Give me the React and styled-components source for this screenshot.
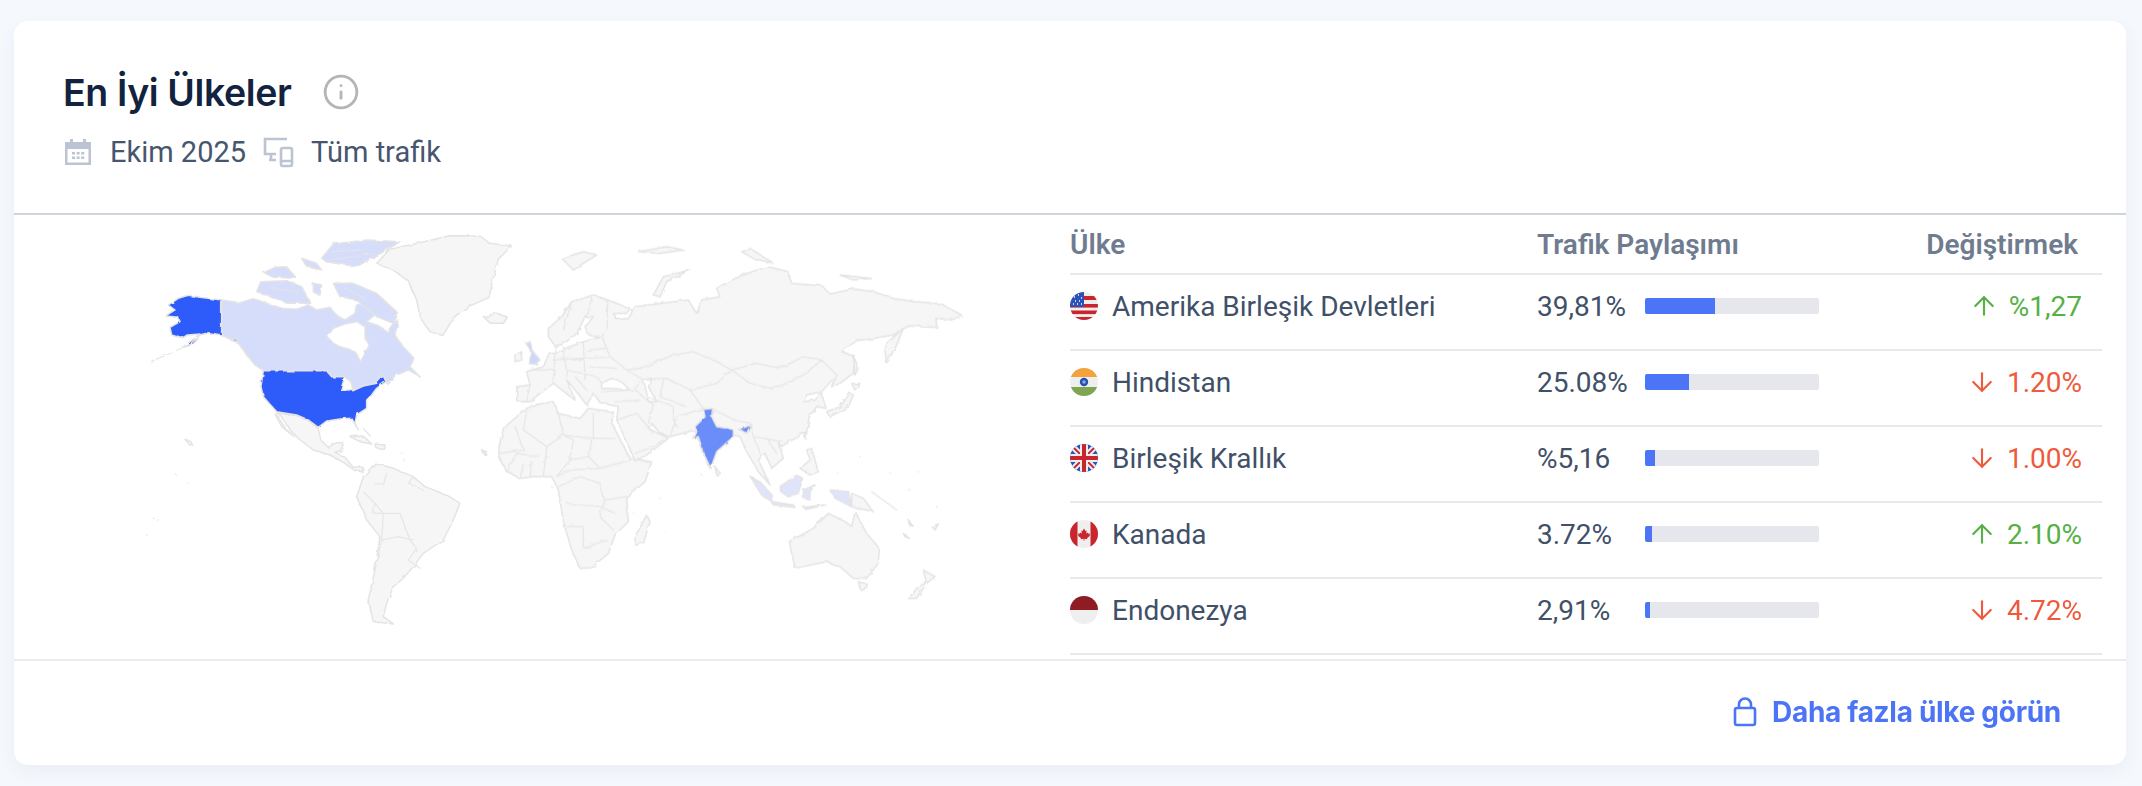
import React from "react";
import styled, { createGlobalStyle } from "styled-components";
import { ArrowUp, ArrowDown, Info } from "lucide-react";

const Global = createGlobalStyle`
  html, body { margin: 0; padding: 0; background: #f5f8fd; }
  body { font-family: Roboto, "Noto Sans", sans-serif; }
`;

const Page = styled.div`
  padding: 21px 16px 21px 14px;
  height: 786px;
  box-sizing: border-box;
`;

const Card = styled.section`
  background: #fff;
  border-radius: 14px;
  box-shadow: 0 6px 18px rgba(60, 80, 120, 0.06);
  height: 744px;
  display: flex;
  flex-direction: column;
  overflow: hidden;
`;

const Header = styled.header`
  padding: 47px 0 0 49px;
  height: 145px;
  border-bottom: 2px solid #cfd4dc;
  display: flex;
  flex-direction: column;
`;

const TitleRow = styled.div`
  display: flex;
  align-items: center;
  gap: 31px;
  height: 48px;
`;

const Title = styled.h2`
  margin: 0;
  font-family: Inter, sans-serif;
  font-size: 37.5px;
  font-weight: 600;
  color: #12233f;
  letter-spacing: -0.4px;
`;

const InfoMark = styled(Info)`
  color: #b5b5b5;
  width: 38px;
  height: 38px;
`;

const Meta = styled.div`
  display: flex;
  align-items: center;
  margin-top: 20px;
  margin-left: 1px;
  height: 32px;
  font-size: 29px;
  color: #46566e;
`;

const MetaIcon = styled.svg`
  color: #bcc3d2;
  flex: none;
`;

const MetaText = styled.span`
  margin-left: ${(p) => p.$gap}px;
  margin-right: ${(p) => p.$after || 0}px;
`;

const Body = styled.div`
  display: flex;
  height: 444px;
`;

const MapPane = styled.svg`
  width: 1056px;
  height: 444px;
  flex: none;
  display: block;
`;

const Land = styled.path`
  fill: ${(p) => p.$fill || "#f6f6f6"};
  stroke: ${(p) => p.$stroke || "#e4e4e4"};
  stroke-width: 4.5;
  stroke-linejoin: round;
  stroke-linecap: round;
`;

const Border = styled.path`
  fill: none;
  stroke: ${(p) => p.$color || "#e6e6e6"};
  stroke-width: ${(p) => p.$w || 3.6};
  stroke-linejoin: round;
  stroke-linecap: round;
`;

const TableWrap = styled.div`
  width: 1032px;
  flex: none;
`;

const HeadRow = styled.div`
  display: grid;
  grid-template-columns: 467px 1fr auto;
  align-items: center;
  height: 58px;
  border-bottom: 2px solid #e8e8ee;
  font-size: 28px;
  font-weight: 600;
  color: #6f7c8f;
  padding-right: 24px;
`;

const Row = styled.div`
  display: grid;
  grid-template-columns: 467px 1fr auto;
  align-items: center;
  height: 62px;
  padding-bottom: 12px;
  border-bottom: 2px solid #e8e8ee;
  font-size: 28px;
  color: #3f5068;
  padding-right: 20px;
`;

const Country = styled.div`
  display: flex;
  align-items: center;
  gap: 14px;
`;

const Flag = styled.svg`
  width: 28px;
  height: 28px;
  flex: none;
`;

const Share = styled.div`
  display: grid;
  grid-template-columns: 108px 174px;
  align-items: center;
`;

const Track = styled.div`
  height: 16px;
  background: #e6e7ec;
  border-radius: 2px;
  overflow: hidden;
`;

const Fill = styled.div`
  height: 100%;
  background: #4c74f6;
`;

const Change = styled.div`
  display: flex;
  align-items: center;
  justify-content: flex-end;
  gap: 10px;
  color: ${(p) => (p.$up ? "#56b145" : "#f05a3c")};
`;

const Footer = styled.footer`
  flex: 1;
  border-top: 2px solid #ebebf0;
  display: flex;
  align-items: center;
  justify-content: flex-end;
  padding-right: 65px;
  padding-bottom: 2px;
`;

const MoreLink = styled.a`
  display: flex;
  align-items: center;
  gap: 15px;
  font-family: Inter, sans-serif;
  font-size: 28px;
  font-weight: 700;
  color: #4c74f6;
  letter-spacing: -0.3px;
`;

const UsFlag = () => (
  <Flag viewBox="0 0 28 28">
    <clipPath id="fus"><circle cx="14" cy="14" r="14" /></clipPath>
    <g clipPath="url(#fus)">
      <rect width="28" height="28" fill="#eeeeee" />
      <rect y="4" width="28" height="4" fill="#c9252f" />
      <rect y="12" width="28" height="3.6" fill="#c9252f" />
      <rect y="18.5" width="28" height="3.6" fill="#c9252f" />
      <rect y="25" width="28" height="3" fill="#c9252f" />
      <rect width="14" height="15" fill="#2a52b8" />
      <path d="M4 5h1M8 3h1M11 6h1M5 9h1M9 9h1M3 12h1M7 12h1M11 12h1" stroke="#fff" strokeWidth="1.6" />
    </g>
  </Flag>
);

const InFlag = () => (
  <Flag viewBox="0 0 28 28">
    <clipPath id="fin"><circle cx="14" cy="14" r="14" /></clipPath>
    <g clipPath="url(#fin)">
      <rect width="28" height="28" fill="#efefef" />
      <rect width="28" height="9" fill="#f4a23c" />
      <rect y="19" width="28" height="9" fill="#7ea552" />
      <circle cx="14" cy="14" r="4.2" fill="#2450ae" />
      <circle cx="14" cy="14" r="1.8" fill="#8ea6dc" />
    </g>
  </Flag>
);

const GbFlag = () => (
  <Flag viewBox="0 0 28 28">
    <clipPath id="fgb"><circle cx="14" cy="14" r="14" /></clipPath>
    <g clipPath="url(#fgb)">
      <rect width="28" height="28" fill="#2a55b8" />
      <path d="M0 0L28 28M28 0L0 28" stroke="#eee" strokeWidth="6" />
      <path d="M3 3L11 11M25 3L17 11M3 25L11 17M25 25L17 17" stroke="#c9252f" strokeWidth="1.8" />
      <path d="M14 0V28M0 14H28" stroke="#eee" strokeWidth="8" />
      <path d="M14 0V28M0 14H28" stroke="#c9252f" strokeWidth="4" />
    </g>
  </Flag>
);

const CaFlag = () => (
  <Flag viewBox="0 0 28 28">
    <clipPath id="fca"><circle cx="14" cy="14" r="14" /></clipPath>
    <g clipPath="url(#fca)">
      <rect width="28" height="28" fill="#efefef" />
      <rect width="7.5" height="28" fill="#c9252f" />
      <rect x="20.5" width="7.5" height="28" fill="#c9252f" />
      <path d="M14 8.5l1.4 2.6 1.3-.6-.5 3 1.7-1 .5 1.2 1.6-.2-.5 1.8.6.5-3 2.2.3 1.2-3-.4v2h-.8v-2l-3 .4.3-1.2-3-2.2.6-.5-.5-1.8 1.6.2.5-1.2 1.7 1-.5-3 1.3.6z" fill="#c9252f" />
    </g>
  </Flag>
);

const IdFlag = () => (
  <Flag viewBox="0 0 28 28">
    <clipPath id="fid"><circle cx="14" cy="14" r="14" /></clipPath>
    <g clipPath="url(#fid)">
      <rect width="28" height="28" fill="#efefef" />
      <rect width="28" height="14" fill="#8f1b24" />
    </g>
  </Flag>
);

const rows = [
  { name: "Amerika Birleşik Devletleri", pct: "39,81%", bar: 40.2, change: "%1,27", up: true, flag: <UsFlag /> },
  { name: "Hindistan", pct: "25.08%", bar: 25, change: "1.20%", up: false, flag: <InFlag /> },
  { name: "Birleşik Krallık", pct: "%5,16", bar: 5.5, change: "1.00%", up: false, flag: <GbFlag /> },
  { name: "Kanada", pct: "3.72%", bar: 3.8, change: "2.10%", up: true, flag: <CaFlag /> },
  { name: "Endonezya", pct: "2,91%", bar: 3, change: "4.72%", up: false, flag: <IdFlag /> },
];

const WorldMap = () => (
  <MapPane viewBox="14 215 1056 444">
    {/* small displacement gives the traced outlines a coastline roughness */}
    <filter id="coast" x="14" y="215" width="1056" height="444" filterUnits="userSpaceOnUse">
      <feTurbulence type="fractalNoise" baseFrequency="0.13" numOctaves="2" seed="4" />
      <feDisplacementMap in="SourceGraphic" scale="3.2" />
    </filter>
    <g filter="url(#coast)">
      <g transform="translate(100 220) scale(0.3333)">
        {/* americas */}
        <Land d="M830,130 L870,88 L960,68 L1050,47 L1140,48 L1170,70 L1235,78 L1195,118 L1178,180 L1168,232 L1100,262 L1062,292 L1028,347 L990,335 L960,292 L950,240 L925,182 L880,152 Z" />
        <Land d="M1150,290 L1190,280 L1222,292 L1210,310 L1172,310 Z" />
        <Land $fill="#d6ddfa" d="M365,240 L420,248 L460,236 L500,250 L545,265 L590,268 L625,255 L650,270 L690,262 L710,285 L735,300 L765,280 L770,250 L800,255 L825,285 L800,305 L830,315 L862,335 L880,310 L895,300 L885,345 L905,375 L942,415 L930,440 L958,468 L925,450 L890,465 L860,490 L850,467 L830,490 L790,498 L760,512 L752,485 L735,472 L695,470 L680,452 L490,452 L465,435 L440,405 L415,370 L365,345 Z" />
        <Land $fill="#ffffff" d="M682,350 L700,325 L735,312 L770,305 L795,320 L795,355 L808,375 L782,425 L765,395 L730,385 L700,370 Z" />
        <Land $fill="#d6ddfa" d="M665,115 L700,72 L800,60 L900,65 L860,90 L820,112 L770,140 L720,132 L680,125 Z" />
        <Land $fill="#d6ddfa" d="M492,158 L525,142 L560,140 L590,175 L520,172 Z" />
        <Land $fill="#d6ddfa" d="M470,215 L482,185 L560,182 L605,200 L632,250 L562,250 L510,228 Z" />
        <Land $fill="#d6ddfa" d="M700,190 L760,190 L830,220 L895,280 L880,310 L830,290 L770,240 L720,230 Z" />
        <Land $fill="#d6ddfa" d="M605,115 L650,130 L665,150 L620,140 Z" />
        <Land $fill="#d6ddfa" d="M640,190 L665,195 L660,225 L640,215 Z" />
        <Border $w="3" d="M700,95 L780,90 M690,120 L760,110 L820,100 M730,200 L800,240 M510,205 L590,215" />
        <Land $fill="#2f5bfa" d="M365,240 L300,232 L265,226 L235,235 L205,255 L225,270 L197,288 L235,292 L240,305 L210,322 L215,345 L245,355 L262,345 L300,342 L245,385 L270,375 L300,345 L325,338 L365,345 Z" />
        <Land $fill="#2f5bfa" d="M398,358 L412,356 L415,364 L403,364 Z" />
        <Border d="M152,424 L200,405 L245,385" />
        <Land $fill="#2f5bfa" d="M490,452 L680,452 L695,470 L735,470 L722,510 L750,510 L760,512 L790,498 L830,490 L850,467 L858,485 L830,505 L815,525 L800,540 L800,565 L770,585 L765,610 L775,630 L755,595 L720,597 L680,603 L655,622 L625,600 L590,585 L530,575 L490,530 L483,500 Z" />
        <Land d="M530,578 L590,587 L625,602 L655,625 L662,660 L685,682 L710,668 L732,668 L722,692 L705,697 L735,712 L760,742 L790,742 L785,755 L765,752 L735,730 L690,705 L640,690 L600,660 L570,630 L545,590 Z" />
        <Land d="M525,582 L545,620 L580,648 L555,625 L535,590 Z" />
        <Land d="M750,650 L790,648 L815,672 L780,665 Z" />
        <Land d="M825,672 L855,675 L850,685 L828,683 Z" />
        <Land d="M255,658 L272,665 L278,676 L266,672 Z" />
        <Land d="M1145,690 L1160,695 L1155,705 Z" />
        <Border $w="4" d="M230,765 h1 M262,790 h1 M160,895 h1 M172,900 h1 M140,945 h1 M905,700 h1 M910,720 h1 M790,625 L810,648" />
        <Land d="M825,730 L880,745 L940,770 L975,800 L1040,825 L1080,850 L1060,900 L1030,960 L970,1000 L940,1040 L910,1075 L880,1100 L860,1150 L850,1190 L880,1212 L820,1205 L805,1140 L825,1050 L840,950 L800,900 L770,830 L790,770 Z" />
        <Border d="M825,790 L850,795 L860,760 M790,815 L825,850 L850,880 L900,880 L930,960 L950,985 L925,1020 M850,880 L845,960 L825,1050 M845,960 L895,950 L940,960 M925,1020 L960,1045 M940,770 L925,790 L970,810 M825,850 L820,880 L900,880" />
      </g>
      <g transform="translate(520 220) scale(0.3333)">
        {/* africa */}
        <Land d="M-63,680 L-50,625 L-10,590 L10,570 L40,555 L100,545 L115,580 L180,595 L205,565 L280,575 L275,610 L330,715 L395,725 L375,785 L320,835 L325,905 L285,945 L265,1000 L215,1043 L180,1045 L155,990 L130,905 L115,810 L95,770 L40,770 L0,775 L-40,755 L-63,715 Z" />
        <Border d="M-15,620 L10,690 L-60,700 M20,570 L10,630 L80,680 L130,645 L115,580 M130,645 L220,655 L220,580 M220,655 L285,655 M80,680 L70,770 M130,645 L160,660 L150,720 L110,770 M150,720 L205,710 L215,660 M205,710 L240,745 L330,720 M110,770 L150,750 L240,745 M115,800 L180,770 L240,790 L250,840 L320,830 M140,850 L240,860 L285,880 M130,920 L190,920 L190,985 M190,985 L260,960 M250,840 L240,890 L280,930 M-40,755 L-10,700 L60,710 M0,775 L10,730 M30,770 L35,725" />
        {/* eurasia */}
        <Land d="M-10,545 L-10,500 L30,495 L25,475 L20,455 L70,440 L85,405 L110,395 L150,380 L190,365 L240,352 L205,345 L195,320 L220,290 L195,290 L170,340 L130,372 L105,378 L85,350 L85,325 L125,290 L155,245 L220,225 L262,240 L330,265 L320,280 L280,280 L290,298 L325,295 L345,260 L420,250 L505,240 L530,280 L545,240 L600,230 L590,205 L630,182 L695,155 L745,140 L805,155 L815,190 L905,197 L930,222 L1000,207 L1060,215 L1120,235 L1185,245 L1260,250 L1325,285 L1295,300 L1248,295 L1250,322 L1165,318 L1120,345 L1060,355 L1010,362 L965,395 L1005,410 L1000,460 L960,490 L935,500 L950,465 L905,515 L860,525 L850,545 L885,540 L905,520 L918,565 L890,560 L868,590 L860,635 L800,670 L785,680 L775,665 L790,715 L755,745 L735,700 L715,720 L750,795 L715,755 L680,695 L660,650 L640,645 L612,675 L590,695 L570,745 L545,690 L525,630 L450,650 L420,640 L395,610 L385,625 L445,655 L380,705 L345,722 L290,600 L295,560 L240,548 L220,520 L200,555 L165,510 L140,480 L165,540 L100,490 L60,520 L30,545 Z" />
        <Land $fill="#ffffff" d="M245,490 L275,475 L310,490 L328,510 L275,505 L245,505 Z" />
        <Land $fill="#ffffff" d="M370,480 L395,475 L385,500 L410,545 L385,545 L378,510 Z" />
        <Land d="M1095,395 L1100,370 L1150,325 L1130,375 L1100,430 Z" />
        <Border d="M155,245 L130,330 M220,225 L195,290 M262,240 L262,320 L245,350 L270,410 L320,450 L360,445 L460,405 L520,395 L600,430 L635,450 L710,430 L780,445 L850,410 L905,420 L950,465 L935,495 M635,450 L690,490 L750,505 L800,490 L850,465 L905,420 M370,480 L440,475 L510,510 L590,490 L635,450 M510,510 L550,565 M578,565 L640,600 L690,610 L700,650 L790,665 M450,650 L470,590 L550,565 M380,530 L460,560 L460,600 L470,620 M345,510 L400,555 L385,610 M245,515 L340,510 M285,545 L360,540 M290,600 L350,580 L400,640 M345,700 L400,680 L430,660 M700,650 L720,700 M740,655 L770,700 M105,380 L100,490 M20,450 L100,450 M130,380 L140,470 M190,365 L195,480 M160,420 L270,410 M140,450 L230,470 L245,490 M165,470 L200,510 M30,495 L20,545 M320,450 L370,480 M340,510 L370,480 M100,420 L190,415 M200,390 L260,385 M210,440 L290,445 M430,480 L420,530 L500,560" />
        {/* india */}
        <Land $fill="#6b8dfa" d="M550,568 L578,565 L575,590 L590,620 L640,628 L640,650 L590,695 L572,745 L548,695 L535,650 L518,655 L528,630 L525,620 L555,590 Z" />
        <Land $fill="#6b8dfa" d="M655,628 L680,620 L695,610 L680,640 L665,632 Z" />
        {/* islands */}
        <Land $fill="#cdd6fb" d="M18,370 L30,365 L40,395 L60,420 L45,433 L25,430 L35,400 Z" />
        <Land d="M-15,405 L5,395 L5,420 L-15,425 Z" />
        <Land d="M345,950 L380,885 L390,905 L370,970 L345,975 Z" />
        <Land d="M585,740 L600,760 L590,765 Z" />
        <Land d="M920,575 L960,560 L990,520 L1000,525 L985,560 L930,590 Z" />
        <Land d="M995,490 L1020,490 L1005,510 Z" />
        <Land d="M1000,405 L1015,445 L1005,465 Z" />
        <Land d="M400,225 L430,170 L510,150 L440,185 L420,230 Z" />
        <Land d="M125,115 L190,95 L230,105 L190,130 L160,150 Z" />
        <Land d="M355,95 L440,80 L490,90 L420,100 Z" />
        <Land d="M665,95 L690,85 L760,130 L700,115 Z" />
        <Land d="M960,165 L1055,175 L1000,180 Z" />
        <Land d="M855,640 L865,640 L855,655 Z" />
        <Land d="M860,690 L875,685 L895,755 L870,765 L840,745 L870,720 Z" />
        <Land $fill="#dfe4fb" d="M690,768 L720,785 L760,830 L755,845 L725,825 Z" />
        <Land $fill="#dfe4fb" d="M755,845 L820,855 L825,862 L760,855 Z" />
        <Land $fill="#dfe4fb" d="M850,862 L915,855 L860,868 Z" />
        <Land $fill="#dfe4fb" d="M780,800 L830,765 L848,775 L835,820 L805,830 L782,815 Z" />
        <Land $fill="#dfe4fb" d="M850,810 L885,795 L870,815 L870,840 L850,835 Z" />
        <Land $fill="#dfe4fb" d="M930,810 L985,815 L995,860 L945,835 Z" />
        <Land d="M995,820 L1030,835 L1060,875 L995,860 Z" />
        <Land d="M808,965 L880,925 L925,880 L975,905 L995,920 L1005,875 L1040,940 L1078,985 L1075,1030 L1040,1075 L1000,1075 L960,1040 L920,1025 L825,1045 L815,1000 Z" />
        <Land d="M1015,1085 L1042,1092 L1035,1112 L1022,1110 Z" />
        <Land d="M1210,1050 L1245,1070 L1220,1090 Z" />
        <Land d="M1200,1095 L1165,1135 L1190,1135 L1220,1090 Z" />
        <Land d="M1165,900 L1178,918 L1168,915 Z" />
        <Land d="M1235,920 L1255,912 L1245,930 Z" />
        <Land d="M1150,940 L1168,955 L1155,950 Z" />
        <Border d="M1055,815 L1130,870" />
        <Border $w="4" d="M1020,710 h1 M950,755 h1 M1110,760 h1 M1195,755 h1 M1165,808 h1 M1250,860 h1 M420,835 h1 M435,940 h1 M340,880 h1 M95,800 h1 M545,765 h1" />
      </g>
    </g>
  </MapPane>
);

export default function App() {
  return (
    <Page>
      <Global />
      <Card>
        <Header>
          <TitleRow>
            <Title>En İyi Ülkeler</Title>
            <InfoMark strokeWidth={1.8} />
          </TitleRow>
          <Meta>
            <MetaIcon width="28" height="28" viewBox="0 0 28 28" fill="currentColor">
              <path d="M6 1h3v3h10V1h3v3h5v23H1V4h5zM3.5 11v13.5h21V11z" />
              <path d="M8 14h3v2.5H8zM12.6 14h3v2.5h-3zM17.2 14h3v2.5h-3zM8 18.5h3V21H8zM12.6 18.5h3V21h-3zM17.2 18.5h3V21h-3z" />
            </MetaIcon>
            <MetaText $gap={18} $after={17}>Ekim 2025</MetaText>
            <MetaIcon width="31" height="31" viewBox="0 0 31 31" fill="none" stroke="currentColor" strokeWidth="2.6">
              <path d="M24 2H2v15h11M6 23h7M8 17v6" />
              <rect x="18" y="11" width="11" height="18" rx="2" />
              <path d="M18 24h11" />
            </MetaIcon>
            <MetaText $gap={17}>Tüm trafik</MetaText>
          </Meta>
        </Header>
        <Body>
          <WorldMap />
          <TableWrap>
            <HeadRow>
              <div>Ülke</div>
              <div>Trafik Paylaşımı</div>
              <div>Değiştirmek</div>
            </HeadRow>
            {rows.map((r) => (
              <Row key={r.name}>
                <Country>
                  {r.flag}
                  {r.name}
                </Country>
                <Share>
                  <span>{r.pct}</span>
                  <Track>
                    <Fill style={{ width: `${r.bar}%` }} />
                  </Track>
                </Share>
                <Change $up={r.up}>
                  {r.up ? <ArrowUp size={30} strokeWidth={1.7} /> : <ArrowDown size={30} strokeWidth={1.7} />}
                  {r.change}
                </Change>
              </Row>
            ))}
          </TableWrap>
        </Body>
        <Footer>
          <MoreLink>
            <svg width="24" height="30" viewBox="0 0 24 30" fill="none" stroke="currentColor" strokeWidth="2.6" strokeLinejoin="round">
              <rect x="2" y="11" width="20" height="17" rx="2" />
              <path d="M6 11V7.5a6 6 0 0 1 12 0V11" />
            </svg>
            Daha fazla ülke görün
          </MoreLink>
        </Footer>
      </Card>
    </Page>
  );
}
